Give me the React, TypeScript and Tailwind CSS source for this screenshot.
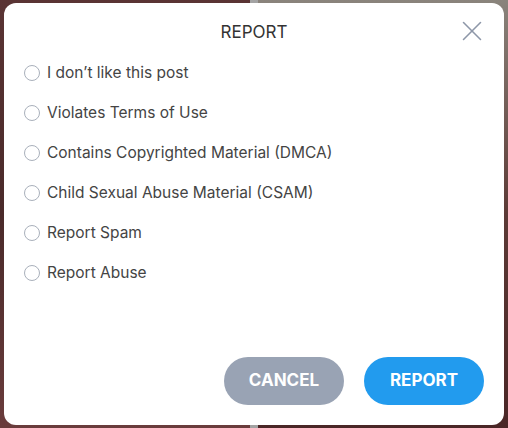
import { X } from 'lucide-react'

const reasons = [
  'I don’t like this post',
  'Violates Terms of Use',
  'Contains Copyrighted Material (DMCA)',
  'Child Sexual Abuse Material (CSAM)',
  'Report Spam',
  'Report Abuse',
]

export default function App() {
  return (
    <div className="relative h-[428px] w-[508px] overflow-hidden" style={{ fontFamily: 'Inter, "Noto Sans", sans-serif' }}>
      <div className="absolute inset-0 flex">
        <div className="w-[250px] bg-gradient-to-b from-[#5a3434] via-[#4a2a2a] to-[#6a3c3c]" />
        <div className="w-[8px] bg-[#a3a3a3]" />
        <div className="flex-1 bg-gradient-to-b from-[#8a847c] via-[#5c3a36] to-[#4a2626]" />
      </div>

      <div className="relative mx-[4px] mt-[3px] flex h-[422px] w-[500px] flex-col rounded-[12px] bg-white">
        <div className="relative flex h-[50px] items-center justify-center">
          <h1 className="pt-[10px] text-[17px] text-[#333]">REPORT</h1>
          <button type="button" className="absolute right-[15px] top-[11px] text-[#8d97a8]" aria-label="Close">
            <X className="h-[34px] w-[34px]" strokeWidth={1.1} />
          </button>
        </div>

        <div className="flex flex-col px-[20px]">
          {reasons.map((reason) => (
            <label key={reason} className="flex h-[40px] items-center gap-[7px] text-[15.5px] text-[#444]">
              <span className="h-[16px] w-[16px] shrink-0 rounded-full border border-[#a9b0bb] bg-white" />
              {reason}
            </label>
          ))}
        </div>

        <div className="flex-1" />

        <div className="flex justify-end gap-[20px] px-[20px] pb-[20px]">
          <button type="button" className="h-[48px] w-[120px] rounded-full bg-[#99a3b4] text-[17px] font-bold text-white">
            CANCEL
          </button>
          <button type="button" className="h-[48px] w-[120px] rounded-full bg-[#229bee] text-[17px] font-bold text-white">
            REPORT
          </button>
        </div>
      </div>
    </div>
  )
}
